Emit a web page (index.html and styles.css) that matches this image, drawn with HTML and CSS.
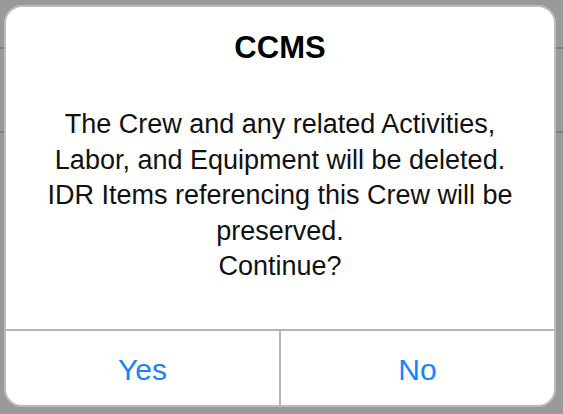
FILE: index.html
```html
<!DOCTYPE html>
<html>
<head>
<meta charset="utf-8">
<link rel="stylesheet" href="styles.css">
</head>
<body>
<div class="alert">
  <div class="alert-body">
    <div class="alert-title">CCMS</div>
    <div class="alert-message">The Crew and any related Activities,<br>Labor, and Equipment will be deleted.<br>IDR Items referencing this Crew will be<br>preserved.<br>Continue?</div>
  </div>
  <div class="alert-buttons">
    <div class="alert-btn">Yes</div>
    <div class="alert-btn">No</div>
  </div>
</div>
</body>
</html>
```
FILE: styles.css
```css
html, body {
  margin: 0;
  padding: 0;
}
body {
  width: 563px;
  height: 414px;
  overflow: hidden;
  background-color: #999999;
  background-image:
    linear-gradient(to bottom, transparent 47px, #7c7c7c 47px, #7c7c7c 49px, transparent 49px),
    linear-gradient(to bottom, transparent 131px, #7c7c7c 131px, #7c7c7c 133px, transparent 133px);
  padding: 5px 7px 7px 4px;
  box-sizing: border-box;
  font-family: "Liberation Sans", Arial, sans-serif;
}
.alert {
  height: 402px;
  background: #ffffff;
  border: 2px solid #bcbcbc;
  border-radius: 18px;
  box-sizing: border-box;
  display: flex;
  flex-direction: column;
  overflow: hidden;
}
.alert-body {
  height: 322px;
  display: flex;
  flex-direction: column;
  align-items: center;
  border-bottom: 2px solid #b5b5b5;
  box-sizing: content-box;
}
.alert-title {
  margin-top: 26px;
  font-size: 31px;
  font-weight: bold;
  color: #000;
  line-height: 30px;
}
.alert-message {
  margin-top: 44px;
  font-size: 27px;
  line-height: 35.5px;
  color: #111;
  text-align: center;
  white-space: nowrap;
}
.alert-buttons {
  flex: 1;
  display: flex;
}
.alert-btn {
  flex: 1;
  display: flex;
  align-items: center;
  justify-content: center;
  color: #1a82fb;
  font-size: 30px;
  padding-top: 4px;
}
.alert-btn + .alert-btn {
  border-left: 2px solid #b5b5b5;
}
```
